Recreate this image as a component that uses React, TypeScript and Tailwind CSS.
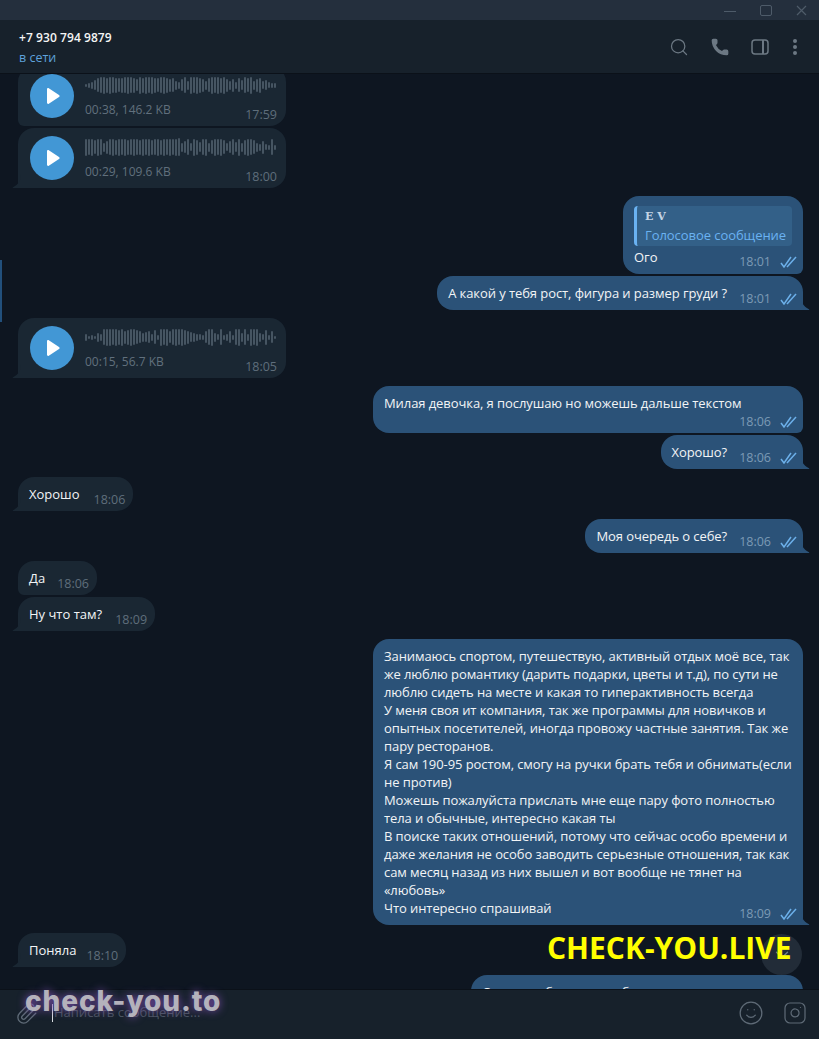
import React from "react";
import { Search, Phone, Paperclip, Smile, Instagram, ChevronDown } from "lucide-react";

const wave1 = [3,4,6,9,12,14,15,13,15,14,13,12,13,14,15,14,13,10,15,13,15,14,15,13,12,14,15,13,11,12,8,6,10,14,8,15,14,15,13,11,8,12,15,14,15,13,15,11,8,11,6,12,9,14,12,15,8,11,13,7,9,5,4,4];
const wave2 = [15,14,15,12,15,14,8,11,14,15,13,15,14,15,13,14,15,14,13,15,14,15,13,14,15,13,15,14,15,14,15,16,8,10,14,7,15,13,9,14,15,8,12,15,14,15,12,7,10,14,9,15,8,13,15,14,12,8,6,11,5,4,14,4];
const wave3 = [6,3,4,3,8,6,14,15,15,14,15,13,15,11,13,15,14,12,10,8,9,10,6,12,4,15,14,15,10,14,15,14,15,13,11,9,8,6,5,4,10,14,15,8,5,14,4,6,10,4,14,15,8,14,6,15,14,15,8,5,13,4,10,3];

function Voice({ bars, info, time, className = "", tail = true }: { bars: number[]; info: string; time: string; className?: string; tail?: boolean }) {
  return (
    <div className={`relative flex h-[60px] w-[268px] shrink-0 items-center gap-[11px] self-start rounded-t-[16px] rounded-br-[16px] bg-[#1a2733] pl-3 ${tail ? "rounded-bl-none" : "rounded-bl-[6px]"} ${className}`}>
      {tail && <Tail />}
      <div className="flex h-[44px] w-[44px] items-center justify-center rounded-full bg-[#4297d5]">
        <svg width="16" height="18" viewBox="0 0 16 18" className="ml-[1px]"><path d="M2 2.2v13.6c0 1 1 1.5 1.8 1L14 10.1c.8-.5.8-1.7 0-2.200L3.800 1.200C3 .7 2 1.200 2 2.200z" fill="#fff" /></svg>
      </div>
      <div className="relative flex h-full flex-1 flex-col pt-[8px]">
        <div className="flex h-[22px] items-center gap-[1px]">
          {bars.map((h, i) => (
            <span key={i} className="w-[2px] rounded-full bg-[#465562]" style={{ height: Math.round(h * 1.15) }} />
          ))}
        </div>
        <span className="mt-[6px] text-[12px] leading-[16px] text-[#61707d]">{info}</span>
        <span className="absolute bottom-[3px] right-[9px] text-[12.500px] leading-[16px] text-[#5f6e7b]">{time}</span>
      </div>
    </div>
  );
}

function Tail({ out = false }: { out?: boolean }) {
  if (out) {
    return (
      <svg width="9" height="14" viewBox="0 0 9 14" className="absolute bottom-0 right-[-7px]">
        <path d="M0 0c0 6 2 10 8 13.200.5.300.3.800-.2.800H0z" fill="#2b5278" />
      </svg>
    );
  }
  return (
    <svg width="9" height="14" viewBox="0 0 9 14" className="absolute bottom-0 left-[-6px]">
      <path d="M9 0c0 6-2 10-8 13.200-.5.300-.3.800.2.800H9z" fill="#1a2733" />
    </svg>
  );
}

function Ticks() {
  return (
    <svg width="18" height="12" viewBox="0 0 18 12" className="shrink-0" fill="none" stroke="#6cb0ea" strokeWidth="1.500">
      <path d="M1 7l3 4L11 1" />
      <path d="M7 11L16 1" />
    </svg>
  );
}

function In({ text, time, tail = true, gap = "ml-3" }: { text: string; time: string; tail?: boolean; gap?: string }) {
  return (
    <div className={`relative flex h-[34px] shrink-0 items-start self-start rounded-t-[16px] rounded-br-[16px] bg-[#1a2733] pl-[11px] pr-[8px] ${tail ? "rounded-bl-none" : "rounded-bl-[6px]"}`}>
      {tail && <Tail />}
      <span className="mt-[8px] text-[13px] leading-[18px] text-[#f2f4f6]">{text}</span>
      <span className={`${gap} mt-[15px] text-[12.500px] leading-[16px] text-[#5f6e7b]`}>{time}</span>
    </div>
  );
}

function Out({ text, time, tail = true }: { text: string; time: string; tail?: boolean }) {
  return (
    <div className={`relative flex h-[34px] shrink-0 items-start self-end rounded-t-[16px] rounded-bl-[16px] bg-[#2b5278] pl-[11px] pr-[5px] ${tail ? "rounded-br-none" : "rounded-br-[6px]"}`}>
      {tail && <Tail out />}
      <span className="mt-[8px] text-[13px] leading-[18px] tracking-[-0.08px] text-[#f2f4f6]">{text}</span>
      <span className="ml-3 mt-[15px] text-[12.500px] leading-[16px] text-[#7c9ab5]">{time}</span>
      <span className="ml-[9px] mt-[17px]"><Ticks /></span>
    </div>
  );
}

const longText = [
  "Занимаюсь спортом, путешествую, активный отдых моё все, так",
  "же люблю романтику (дарить подарки, цветы и т.д), по сути не",
  "люблю сидеть на месте и какая то гиперактивность всегда",
  "У меня своя ит компания, так же программы для новичков и",
  "опытных посетителей, иногда провожу частные занятия. Так же",
  "пару ресторанов.",
  "Я сам 190-95 ростом, смогу на ручки брать тебя и обнимать(если",
  "не против)",
  "Можешь пожалуйста прислать мне еще пару фото полностью",
  "тела и обычные, интересно какая ты",
  "В поиске таких отношений, потому что сейчас особо времени и",
  "даже желания не особо заводить серьезные отношения, так как",
  "сам месяц назад из них вышел и вот вообще не тянет на",
  "«любовь»",
  "Что интересно спрашивай",
];

export default function App() {
  return (
    <div className="relative flex h-[1039px] w-[819px] flex-col overflow-hidden bg-[#0e1621] font-['Open_Sans',sans-serif]">
      {/* Заголовок окна */}
      <div className="flex h-[20px] shrink-0 items-center justify-end bg-[#242f3d] pr-[12px]">
        <span className="mt-[3px] h-[1px] w-[12px] bg-[#4e5b69]" />
        <span className="ml-[24px] h-[11px] w-[12px] rounded-[2px] border border-[#4e5b69]" />
        <svg width="11" height="11" viewBox="0 0 11 11" stroke="#4e5b69" strokeWidth="1.200" className="ml-[24px]">
          <path d="M1 1l9 9M10 1l-9 9" />
        </svg>
      </div>

      {/* Шапка чата */}
      <header className="flex h-[54px] shrink-0 items-center justify-between border-b border-[#0b1119] bg-[#17212b] pl-[19px] pr-[22px]">
        <div className="mt-[2px] flex flex-col">
          <span className="text-[12px] font-semibold leading-[18px] tracking-[0.07px] text-[#f5f5f5]">+7 930 794 9879</span>
          <span className="mt-[2px] text-[12.500px] leading-[18px] text-[#5ea2dc]">в сети</span>
        </div>
        <div className="flex items-center text-[#6c7883]">
          <Search size={20} strokeWidth={1.500} />
          <Phone size={20} fill="currentColor" strokeWidth={0} className="ml-[21px]" />
          <svg width="18" height="16" viewBox="0 0 18 16" fill="none" stroke="currentColor" strokeWidth="1.500" className="ml-[21px]">
            <rect x="1" y="1" width="16" height="14" rx="3" />
            <path d="M12 1v14" strokeWidth="2" />
          </svg>
          <svg width="4" height="16" viewBox="0 0 4 16" fill="currentColor" className="ml-[24px]">
            <circle cx="2" cy="2" r="2" /><circle cx="2" cy="8" r="2" /><circle cx="2" cy="14" r="2" />
          </svg>
        </div>
      </header>

      {/* Сообщения */}
      <main className="relative flex min-h-0 flex-1 flex-col overflow-hidden pl-[18px] pr-[16px]">
        <span className="absolute left-0 top-[186px] h-[62px] w-[2px] bg-[#22507c]" />
        <div className="mt-[-8px] flex flex-col gap-[2px]">
          <Voice bars={wave1} info="00:38, 146.2 KB" time="17:59" tail={false} />
          <Voice bars={wave2} info="00:29, 109.6 KB" time="18:00" />

          <div className="relative mt-[6px] flex h-[78px] w-[180px] shrink-0 flex-col self-end rounded-t-[16px] rounded-bl-[16px] rounded-br-[6px] bg-[#2b5278] pl-[11px] pr-[5px] pt-[10px]">
            <div className="flex h-[40px] w-[158px] flex-col rounded-[4px] border-l-[3px] border-[#6ab2f2] bg-[#336088] pl-[8px] pt-[2px]">
              <span className="font-['DejaVu_Serif',serif] text-[11px] font-bold leading-[18px] text-[#c3d4e4]">𝐄 𝐕</span>
              <span className="text-[13px] leading-[18px] tracking-[-0.06px] text-[#6ab2f2]">Голосовое сообщение</span>
            </div>
            <div className="flex items-start">
              <span className="mt-[2px] text-[13px] leading-[18px] text-[#f2f4f6]">Ого</span>
              <span className="ml-auto mt-[8px] text-[12.500px] leading-[16px] text-[#7c9ab5]">18:01</span>
              <span className="ml-[9px] mt-[10px]"><Ticks /></span>
            </div>
          </div>
          <Out text="А какой у тебя рост, фигура и размер груди ?" time="18:01" />

          <Voice className="mt-[6px]" bars={wave3} info="00:15, 56.7 KB" time="18:05" />

          <div className="mt-[6px] flex flex-col gap-[2px]">
            <div className="relative flex h-[47px] w-[430px] shrink-0 items-start self-end rounded-[16px] rounded-br-[6px] bg-[#2b5278] pl-[11px] pr-[5px]">
              <span className="mt-[8px] text-[13px] leading-[18px] tracking-[-0.08px] text-[#f2f4f6]">Милая девочка, я послушаю но можешь дальше текстом</span>
              <div className="absolute bottom-[3px] right-[5px] flex items-start">
                <span className="text-[12.500px] leading-[16px] text-[#7c9ab5]">18:06</span>
                <span className="ml-[9px] mt-[2px]"><Ticks /></span>
              </div>
            </div>
            <Out text="Хорошо?" time="18:06" />
          </div>

          <div className="mt-[6px] flex flex-col"><In text="Хорошо" time="18:06" gap="ml-[14px]" /></div>
          <div className="mt-[6px] flex flex-col"><Out text="Моя очередь о себе?" time="18:06" /></div>
          <div className="mt-[6px] flex flex-col gap-[2px]">
            <In text="Да" time="18:06" tail={false} />
            <In text="Ну что там?" time="18:09" gap="ml-[13px]" />
          </div>

          <div className="relative mt-[6px] flex h-[286px] w-[430px] shrink-0 flex-col self-end rounded-t-[16px] rounded-bl-[16px] bg-[#2b5278] pl-[11px] pt-[8px]">
            <Tail out />
            {longText.map((line) => (
              <span key={line} className="whitespace-nowrap text-[13px] leading-[18px] tracking-[-0.08px] text-[#f2f4f6]">{line}</span>
            ))}
            <div className="absolute bottom-[3px] right-[5px] flex items-start">
              <span className="text-[12.500px] leading-[16px] text-[#7c9ab5]">18:09</span>
              <span className="ml-[9px] mt-[2px]"><Ticks /></span>
            </div>
          </div>

          <div className="mt-[6px] flex flex-col"><In text="Поняла" time="18:10" gap="ml-[10px]" /></div>
          <div className="mt-[6px] flex h-[34px] w-[332px] shrink-0 self-end rounded-t-[16px] bg-[#2b5278] pl-[11px] pt-[8px]">
            <span className="text-[13px] leading-[18px] text-[#f2f4f6]">Сегодня обязательно буду</span>
          </div>
        </div>

        {/* Кнопка вниз */}
        <div className="absolute bottom-[14px] right-[17px] flex h-[41px] w-[41px] items-center justify-center rounded-full bg-[#222c38] text-[#75818c]">
          <ChevronDown size={22} strokeWidth={1.500} />
        </div>
      </main>

      {/* Поле ввода */}
      <footer className="flex h-[50px] shrink-0 items-center border-t border-[#0b1119] bg-[#17212b] pb-[3px] pl-[15px] pr-[12px] text-[#5f6b77]">
        <Paperclip size={23} strokeWidth={1.400} />
        <span className="ml-[14px] h-[18px] w-[1px] bg-[#d8dce0]" />
        <span className="ml-[1px] text-[13px] text-[#4a5560]">Написать сообщение...</span>
        <Smile size={26} strokeWidth={1.200} className="ml-auto" />
        <Instagram size={24} strokeWidth={1.200} className="ml-[19px]" />
      </footer>

      {/* Водяные знаки */}
      <span className="absolute left-[547px] top-[928px] text-[30px] font-bold leading-[40px] text-[#ffff00]">CHECK-YOU.LIVE</span>
      <span className="absolute left-[25px] top-[984px] font-['Inter',sans-serif] text-[28px] font-extrabold leading-[34px] tracking-[0.9px] text-[#b4b2bc] [text-shadow:0_0_8px_#7b4fb0]">check-you.to</span>
    </div>
  );
}
